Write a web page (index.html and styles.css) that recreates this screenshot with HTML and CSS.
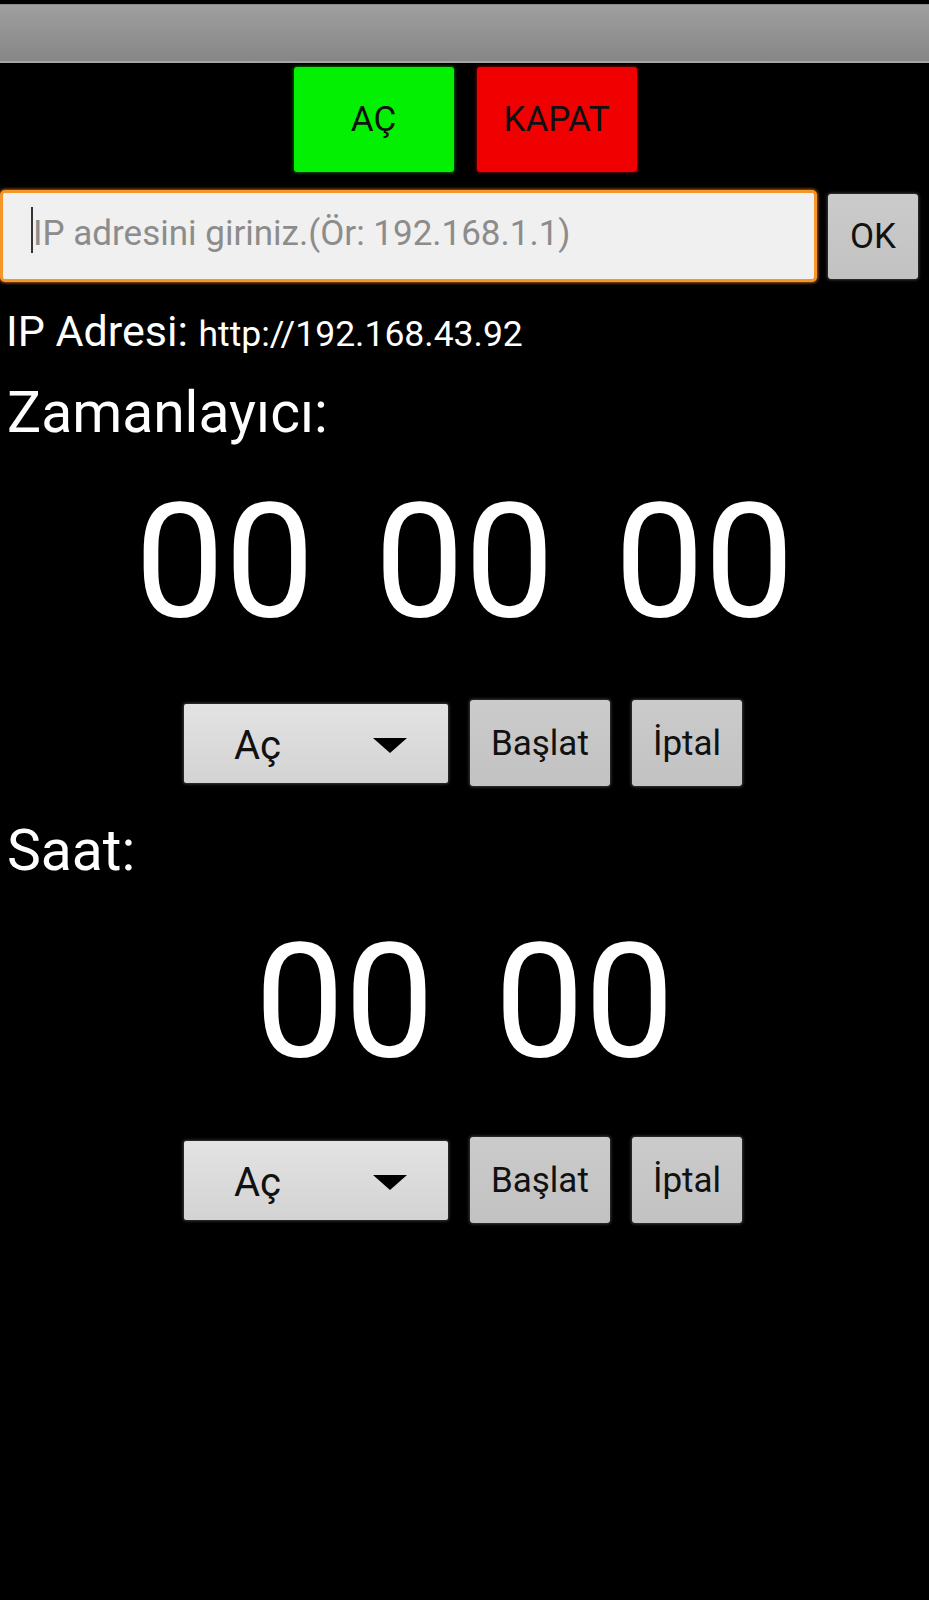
FILE: index.html
```html
<!DOCTYPE html>
<html lang="tr">
<head>
<meta charset="utf-8">
<title>Kontrol</title>
<link rel="stylesheet" href="styles.css">
</head>
<body>
<div class="appbar"></div>

<div class="toggle-row">
  <button class="toggle toggle-on">AÇ</button>
  <button class="toggle toggle-off">KAPAT</button>
</div>

<div class="ip-form">
  <div class="ip-field"><span class="caret"></span><span class="placeholder">IP adresini giriniz.(Ör: 192.168.1.1)</span></div>
  <button class="btn btn-ok">OK</button>
</div>

<div class="ip-info">IP Adresi: <span class="ip-url">http://192.168.43.92</span></div>

<section class="timer">
  <div class="section-title">Zamanlayıcı:</div>
  <div class="digits"><span class="pair">00</span><span class="pair">00</span><span class="pair">00</span></div>
  <div class="controls">
    <div class="spinner"><span class="spinner-value">Aç</span><span class="spinner-arrow"></span></div>
    <button class="btn btn-action">Başlat</button>
    <button class="btn btn-action">İptal</button>
  </div>
</section>

<section class="clock">
  <div class="section-title">Saat:</div>
  <div class="digits"><span class="pair">00</span><span class="pair">00</span></div>
  <div class="controls">
    <div class="spinner"><span class="spinner-value">Aç</span><span class="spinner-arrow"></span></div>
    <button class="btn btn-action">Başlat</button>
    <button class="btn btn-action">İptal</button>
  </div>
</section>
</body>
</html>
```

FILE: styles.css
```css
html, body {
  margin: 0;
  padding: 0;
  background: #000;
}

body {
  font-family: Roboto, "Liberation Sans", sans-serif;
  color: #fff;
  width: 929px;
  min-height: 1600px;
}

.appbar {
  margin-top: 4px;
  height: 59px;
  box-sizing: border-box;
  background: linear-gradient(#9f9f9f, #868686);
  border-top: 1px solid #8a8a8a;
  border-bottom: 2px solid #a6a6a6;
}

.toggle-row {
  display: flex;
  justify-content: center;
  gap: 23px;
  margin-top: 4px;
  padding-left: 1px;
}

.toggle {
  width: 160px;
  height: 105px;
  border: none;
  border-radius: 3px;
  padding: 0;
  font-family: Roboto, "Liberation Sans", sans-serif;
  font-size: 35px;
  color: #111;
  display: flex;
  align-items: center;
  justify-content: center;
}

.toggle-on {
  background: #03f003;
  box-shadow: 0 0 3px 1px rgba(0, 160, 0, 0.6);
}

.toggle-off {
  background: #f00000;
  box-shadow: 0 0 3px 1px rgba(170, 0, 0, 0.6);
}

.ip-form {
  display: flex;
  align-items: center;
  gap: 11px;
  margin-top: 18px;
}

.ip-field {
  width: 817px;
  height: 92px;
  box-sizing: border-box;
  background: #f0f0f0;
  border: 3px solid #f5962a;
  border-radius: 5px;
  box-shadow: 0 0 3px 1px rgba(240, 130, 20, 0.7);
  display: flex;
  align-items: center;
  padding: 0 0 12px 28px;
}

.caret {
  width: 2px;
  height: 46px;
  background: #333;
}

.placeholder {
  font-size: 35px;
  color: #8c8c8c;
  margin-top: 6px;
  white-space: nowrap;
}

.btn {
  border: none;
  padding: 0;
  border-radius: 3px;
  font-family: Roboto, "Liberation Sans", sans-serif;
  color: #111;
  background: linear-gradient(#cbcbcb, #c2c2c2);
  box-shadow: 0 0 3px 1px rgba(110, 110, 110, 0.55);
  display: flex;
  align-items: center;
  justify-content: center;
}

.btn-ok {
  width: 90px;
  height: 85px;
  font-size: 35px;
}

.ip-info {
  margin-top: 25px;
  padding-left: 6px;
  font-size: 43px;
  line-height: 48px;
  white-space: nowrap;
}

.ip-url {
  font-size: 35.5px;
  line-height: 1;
}

.section-title {
  font-size: 57px;
  line-height: 68px;
  padding-left: 7px;
}

.timer .section-title {
  margin-top: 24px;
}

.clock .section-title {
  margin-top: 31px;
}

.digits {
  display: flex;
  justify-content: center;
  gap: 60px;
  font-size: 160px;
  line-height: 160px;
}

.timer .digits {
  margin-top: 35px;
}

.clock .digits {
  margin-top: 37px;
}

.controls {
  display: flex;
  align-items: center;
  justify-content: center;
  gap: 22px;
  padding-right: 3px;
}

.timer .controls {
  margin-top: 58px;
}

.clock .controls {
  margin-top: 55px;
}

.spinner {
  width: 264px;
  height: 79px;
  box-sizing: border-box;
  display: flex;
  align-items: center;
  padding: 4px 41px 0 50px;
  border-radius: 2px;
  background: linear-gradient(#e3e3e3, #d3d3d3);
  box-shadow: 0 0 3px 1px rgba(110, 110, 110, 0.55);
  color: #111;
}

.spinner-value {
  font-size: 40px;
}

.spinner-arrow {
  margin-left: auto;
  width: 0;
  height: 0;
  border-left: 17px solid transparent;
  border-right: 17px solid transparent;
  border-top: 15px solid #000;
}

.btn-action {
  height: 86px;
  padding: 0 21px;
  font-size: 35px;
}
```
